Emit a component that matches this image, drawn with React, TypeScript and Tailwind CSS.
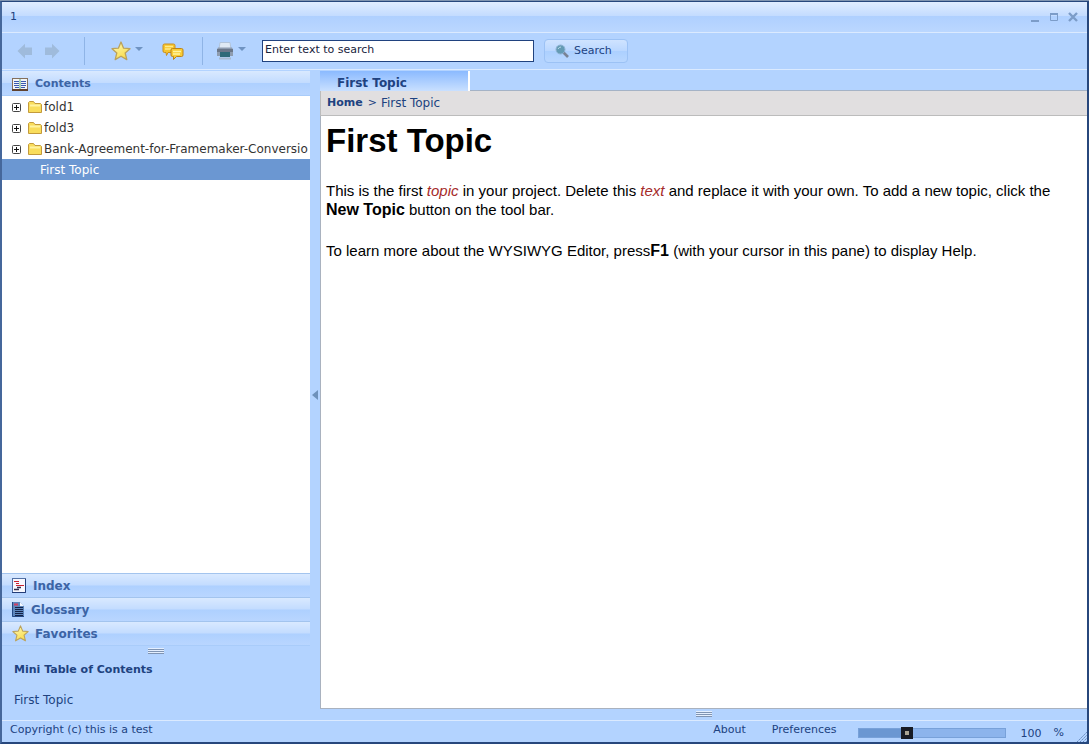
import React from "react";

const BAR =
  "bg-[linear-gradient(to_bottom,#d9e9ff_0%,#c3dcff_48%,#aed0ff_52%,#b9d6ff_100%)]";

function Star({ size = 20 }: { size?: number }) {
  return (
    <svg width={size} height={size} viewBox="0 0 20 20" aria-hidden="true">
      <defs>
        <linearGradient id="gold" x1="0" y1="0" x2="0.6" y2="1">
          <stop offset="0" stopColor="#fffbb8" />
          <stop offset="1" stopColor="#f8dc4c" />
        </linearGradient>
      </defs>
      <path
        d="M10 1 12.6 7.2 19 7.7 14.2 12 15.8 18.6 10 15.2 4.2 18.6 5.8 12 1 7.7 7.4 7.2Z"
        fill="url(#gold)"
        stroke="#bba25c"
        strokeWidth="1.3"
        strokeLinejoin="round"
      />
    </svg>
  );
}

function Arrow({ back = false }: { back?: boolean }) {
  return (
    <svg width="16" height="16" viewBox="0 0 16 16" aria-hidden="true">
      <path
        d={back ? "M0.5 8 8 0.8V4.500H15V12H8V15.500Z" : "M15.500 8 8 0.8V4.500H1V12H8V15.500Z"}
        fill="#9fbbdc"
      />
    </svg>
  );
}

function Caret() {
  return (
    <svg width="8" height="4" viewBox="0 0 8 4" aria-hidden="true">
      <path d="M0 0H8L4 4Z" fill="#6f93c2" />
    </svg>
  );
}

function Comments() {
  return (
    <svg width="22" height="17" viewBox="0 0 22 17" aria-hidden="true">
      <path d="M2.500 1H11.500Q13 1 13 2.500V8Q13 9.500 11.500 9.500H6L4.500 12.500L4 9.500H2.500Q1 9.500 1 8V2.500Q1 1 2.500 1Z" fill="#f7c52c" stroke="#c98f20" />
      <path d="M3 3.500H11M3 6H9" stroke="#ffec8a" strokeWidth="1.500" />
      <path d="M10.500 5.500H19.500Q21 5.500 21 7V12Q21 13.500 19.500 13.500H14.500L11.500 16.500V13.500H10.500Q9 13.500 9 12V7Q9 5.500 10.500 5.500Z" fill="#f9cc34" stroke="#bd8318" />
      <path d="M11 8.500H19M11 11H18" stroke="#fff3a0" strokeWidth="1.500" />
    </svg>
  );
}

function Printer() {
  return (
    <svg width="18" height="18" viewBox="0 0 18 18" aria-hidden="true">
      <path d="M4 0.500H14L15 7H3Z" fill="#dfe9f4" stroke="#b2c4da" />
      <path d="M2 5.500H16L17 7.500V14H1V7.500Z" fill="#8e9caf" />
      <rect x="1" y="7" width="16" height="3" fill="#6b7789" />
      <rect x="4" y="10" width="10" height="5" fill="#2f6a78" />
      <path d="M3 16.500H15" stroke="#a7bacf" strokeWidth="2" />
    </svg>
  );
}

function Magnifier() {
  return (
    <svg width="14" height="14" viewBox="0 0 14 14" aria-hidden="true">
      <path d="M8 8 13 13" stroke="#7a8394" strokeWidth="2.600" />
      <circle cx="5.500" cy="5.500" r="4.500" fill="#649bb4" stroke="#8eb3d4" />
      <path d="M3 5Q4 3 6 3" stroke="#b8dceb" fill="none" />
    </svg>
  );
}

function BookIcon() {
  return (
    <svg width="16" height="14" viewBox="0 0 16 14" aria-hidden="true">
      <rect x="0.500" y="1.500" width="15" height="11" fill="#f2f5f8" stroke="#85705c" />
      <path d="M0 13H16" stroke="#60422f" strokeWidth="2" />
      <path d="M8 2V12" stroke="#8fc4a0" strokeWidth="1.500" />
      <path d="M2 4.500H7M2 6.500H7M2 8.500H7M3 10.500H7M9 4.500H14M9 6.500H14M9 8.500H14M9 10.500H13" stroke="#3a5bb0" />
    </svg>
  );
}

function IndexIcon() {
  return (
    <svg width="14" height="15" viewBox="0 0 14 15" aria-hidden="true">
      <rect x="0.500" y="0.500" width="13" height="14" fill="#f7f8ff" stroke="#5371a5" />
      <path d="M13.500 1V14.500H0" stroke="#243d78" fill="none" />
      <path d="M2 3.500H7M4 5.500H7M4 7.500H12" stroke="#cc2331" strokeWidth="1.200" />
      <path d="M5 9.500H9M2 11.500H7" stroke="#372f4e" strokeWidth="1.300" />
    </svg>
  );
}

function GlossaryIcon() {
  return (
    <svg width="12" height="15" viewBox="0 0 12 15" aria-hidden="true">
      <path d="M0 0H8L12 4V15H0Z" fill="#5d86bc" />
      <path d="M8 0V4H12Z" fill="#f4f7ff" />
      <path d="M2 2.500H6" stroke="#d13f63" strokeWidth="2" />
      <path d="M3 5.500H11M3 7.500H11M3 9.500H11M3 11.500H11M3 13.500H11" stroke="#142247" />
      <path d="M.5 0V14.500H12" stroke="#254a86" fill="none" />
    </svg>
  );
}

function Folder() {
  return (
    <svg width="14" height="12" viewBox="0 0 14 12" aria-hidden="true">
      <path d="M.5 11.500V1.500L1.500 .5H5.500L7 2.500H12.500L13.500 3.500V11.500Z" fill="#f9dd5c" stroke="#c39a3c" />
      <path d="M2 4.500H12" stroke="#fff3a0" strokeWidth="2" />
    </svg>
  );
}

function Plus() {
  return (
    <svg width="9" height="9" viewBox="0 0 9 9" aria-hidden="true">
      <rect x="0.500" y="0.500" width="8" height="8" rx="1" fill="#fff" stroke="#444" />
      <path d="M2 4.500H7M4.500 2V7" stroke="#111" />
    </svg>
  );
}

function Grip() {
  return (
    <svg width="16" height="6" viewBox="0 0 16 6" aria-hidden="true">
      <path d="M0 1.500H16M0 3.500H16M0 5.500H16" stroke="#7f94b3" />
      <path d="M0 .5H16M0 2.500H16M0 4.500H16" stroke="#e4efff" />
    </svg>
  );
}

function PanelBar({ icon, label, gap }: { icon: React.ReactNode; label: string; gap: string }) {
  return (
    <button
      className={`flex h-6 w-full items-center border-t border-[#a3c4ee] pl-[10px] text-left text-xs font-bold text-[#3c64a5] ${gap} ${BAR}`}
    >
      {icon}
      {label}
    </button>
  );
}

const folders = ["fold1", "fold3", "Bank-Agreement-for-Framemaker-Conversion"];

export default function App() {
  return (
    <div className="flex min-h-screen flex-col border-t border-[#8195b0] bg-[#b3d3ff] font-['DejaVu_Sans',Verdana,sans-serif] text-[11px] leading-4 text-[#20427f]">
      <div className="flex flex-1 flex-col border-2 border-t border-[#27477c] border-l-[#45679b]">
        <header className="flex h-[30px] items-center justify-between bg-[linear-gradient(to_bottom,#e0edff_0%,#c4dcff_45%,#afd0ff_47%,#bbd7ff_100%)] pr-2 pb-px pl-2">
          <span>1</span>
          <div className="flex items-center gap-[7px]">
            <button aria-label="Minimize">
              <svg width="12" height="12" viewBox="0 0 12 12"><path d="M2 10H10" stroke="#7c9cc8" strokeWidth="2" /></svg>
            </button>
            <button aria-label="Maximize">
              <svg width="12" height="12" viewBox="0 0 12 12"><path d="M2.500 2V9.500H9.500V2" stroke="#7c9cc8" fill="none" /><path d="M2 3H10" stroke="#7c9cc8" strokeWidth="2" /></svg>
            </button>
            <button aria-label="Close">
              <svg width="12" height="12" viewBox="0 0 12 12"><path d="M2 2 10 10M10 2 2 10" stroke="#7c9cc8" strokeWidth="2.400" /></svg>
            </button>
          </div>
        </header>

        <div className="flex h-[38px] items-center border-y border-[#dbeaff] pl-[15px]">
          <button aria-label="Back"><Arrow back /></button>
          <button aria-label="Forward" className="ml-[11px]"><Arrow /></button>
          <div className="ml-6 h-7 w-px bg-[#8fb4e6]" />
          <button aria-label="Add favorite" className="ml-[26px] flex items-center gap-1">
            <Star />
            <span className="pb-1"><Caret /></span>
          </button>
          <button aria-label="Comments" className="ml-[19px]"><Comments /></button>
          <div className="ml-[18px] h-7 w-px bg-[#8fb4e6]" />
          <button aria-label="Print" className="ml-[13px] flex items-center gap-1">
            <Printer />
            <span className="pb-1"><Caret /></span>
          </button>
          <input
            aria-label="Search text"
            defaultValue="Enter text to search"
            className="ml-4 h-[22px] w-[272px] border border-[#20427f] bg-white px-[2px] pb-[3px] text-[11px] text-[#17233c] outline-none"
          />
          <button className="ml-[10px] flex h-6 w-[84px] items-center gap-[5px] rounded-sm border border-[#9cc2f5] bg-[linear-gradient(to_bottom,#cfe3ff,#bad7ff_50%,#acd0ff_52%,#b9d7ff)] pl-[10px]">
            <Magnifier />
            Search
          </button>
        </div>

        <div className="flex flex-1">
          <aside className="flex w-[308px] shrink-0 flex-col pt-px">
            <button className={`flex h-[25px] w-full items-center gap-[7px] border-b border-[#a9ccfa] pt-px pl-[10px] text-left font-bold text-[#3c64a5] ${BAR}`}>
              <BookIcon />
              Contents
            </button>
            <ul className="flex-1 bg-white text-xs text-[#333]">
              {folders.map((name) => (
                <li key={name} className="flex h-[21px] items-center overflow-hidden pr-[2px] pl-[10px]">
                  <button aria-label={`Expand ${name}`} className="mt-px mr-[7px] shrink-0"><Plus /></button>
                  <span className="mr-[2px] shrink-0"><Folder /></span>
                  <span className="overflow-hidden whitespace-nowrap">{name}</span>
                </li>
              ))}
              <li className="flex h-[21px] items-center bg-[#6b97d2] pl-[38px] text-white">
                <a href="#first-topic">First Topic</a>
              </li>
            </ul>
            <PanelBar icon={<IndexIcon />} label="Index" gap="gap-[7px]" />
            <PanelBar icon={<GlossaryIcon />} label="Glossary" gap="gap-[7px]" />
            <PanelBar icon={<Star size={17} />} label="Favorites" gap="gap-[6px]" />
            <div className="flex h-[13px] justify-center border-t border-[#a9ccfa] pt-[2px]"><Grip /></div>
            <div className="h-[62px] pt-1 pl-3">
              <h2 className="font-bold">Mini Table of Contents</h2>
              <a href="#first-topic" className="mt-[14px] block text-xs">First Topic</a>
            </div>
          </aside>

          <button aria-label="Collapse navigation" className="flex w-[10px] shrink-0 items-center justify-center">
            <svg width="6" height="10" viewBox="0 0 6 10"><path d="M6 0V10L0 5Z" fill="#6e91bb" /></svg>
          </button>

          <main className="flex min-w-0 flex-1 flex-col pt-px">
            <div className="flex h-5">
              <button className="w-[150px] border-r-2 border-white bg-[linear-gradient(to_bottom,#8bbaff,#c9e0ff)] pt-1 pl-[17px] text-left text-xs font-bold">
                First Topic
              </button>
              <div className="flex-1 border-b border-[#a5b3c6]" />
            </div>
            <nav aria-label="Breadcrumb" className="flex h-[25px] items-center border-b border-l border-[#bcbcbc] bg-[#e1dfe0] pl-[6px]">
              <a href="#home" className="font-bold">Home</a>
              <span className="mr-1 ml-[5px]">&gt;</span>
              <span className="text-xs">First Topic</span>
            </nav>
            <article className="flex-1 border-b border-l border-[#a9b2bf] bg-white pt-[5px] pr-4 pl-[5px] font-['Liberation_Sans',Arial,sans-serif] text-[15px] leading-[19px] text-black">
              <h1 className="text-[33px] leading-10 font-bold">First Topic</h1>
              <p className="mt-5">
                This is the first <em className="text-[#a52a2a]">topic</em> in your project. Delete this{" "}
                <em className="text-[#a52a2a]">text</em> and replace it with your own. To add a new topic, click the{" "}
                <strong className="text-base leading-[19px]">New Topic</strong> button on the tool bar.
              </p>
              <p className="mt-[22px]">
                To learn more about the WYSIWYG Editor, press<strong className="text-base leading-[19px]">F1</strong> (with your cursor in this pane) to display Help.
              </p>
            </article>
            <div className="flex h-[11px] justify-center pt-[2px]"><Grip /></div>
          </main>
        </div>

        <footer className="flex h-[22px] items-center justify-between border-t border-[#dbeaff] pl-2">
          <span className="pb-[3px]">Copyright (c) this is a test</span>
          <div className="flex items-center">
            <a href="#about" className="pb-[3px]">About</a>
            <a href="#preferences" className="ml-[26px] pb-[3px]">Preferences</a>
            <input
              type="range"
              aria-label="Zoom"
              min={0}
              max={300}
              defaultValue={96}
              className="mt-[3px] ml-[21px] h-[10px] w-[148px] appearance-none border border-[#78a1d9] bg-[linear-gradient(to_right,#6b97d2_33%,#8cb4ec_33%)] [&::-webkit-slider-thumb]:h-3 [&::-webkit-slider-thumb]:w-3 [&::-webkit-slider-thumb]:appearance-none [&::-webkit-slider-thumb]:border-[4px] [&::-webkit-slider-thumb]:border-[#171b24] [&::-webkit-slider-thumb]:bg-[#aaa594]"
            />
            <span className="mt-1 ml-[15px]">100</span>
            <span className="mt-[2px] ml-3">%</span>
            <svg className="ml-[13px] self-end" width="10" height="12" viewBox="0 0 10 12" aria-hidden="true">
              <path d="M0 12 10 2M3 12 10 5M6 12 10 8M9 12 10 11" stroke="#6387bd" strokeDasharray="2 1" />
            </svg>
          </div>
        </footer>
      </div>
    </div>
  );
}
